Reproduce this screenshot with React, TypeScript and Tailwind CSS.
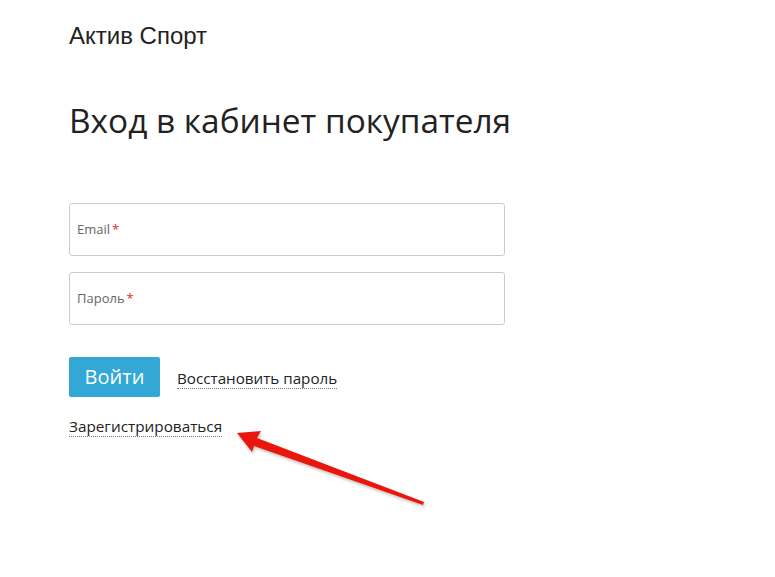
import React from 'react';

const font = { fontFamily: '"Open Sans", "Noto Sans", sans-serif' };

function Field({ label }: { label: string }) {
  return (
    <div className="h-[53px] w-[436px] rounded-[3px] border border-[#cccccc] bg-white flex items-center px-[7px]">
      <span className="text-[13px] text-[#666666]">{label}</span>
      <span className="text-[13px] text-[#e3262b] ml-[2px]">*</span>
    </div>
  );
}

export default function App() {
  return (
    <div className="relative min-h-[577px] w-[775px] bg-white text-[#222222]" style={font}>
      <div className="pl-[69px] pt-[22px]">
        <div className="font-['Liberation_Sans',Arial,sans-serif] text-[24px] leading-[28px] text-[#222222]">Актив Спорт</div>

        <h1 className="mt-[48px] text-[33.4px] leading-[44px] font-normal text-[#222222]">Вход в кабинет покупателя</h1>

        <form className="mt-[61px] flex flex-col gap-[16px]">
          <Field label="Email" />
          <Field label="Пароль" />
        </form>

        <div className="mt-[32px] flex items-center gap-[17px]">
          <button className="h-[40px] w-[91px] rounded-[2px] bg-[#33a7d5] text-white text-[20px]">Войти</button>
          <a className="text-[15.2px] leading-[20px] text-[#222222] border-b border-dotted border-[#777777] mt-[2px]">Восстановить пароль</a>
        </div>

        <div className="mt-[17px]">
          <a className="text-[15.3px] leading-[20px] text-[#222222] border-b border-dotted border-[#777777]">Зарегистрироваться</a>
        </div>
      </div>

      <svg className="absolute left-0 top-0 pointer-events-none" width="775" height="577">
        <defs>
          <filter id="sh" x="-20%" y="-20%" width="140%" height="140%">
            <feDropShadow dx="1" dy="2" stdDeviation="1.5" floodColor="#000" floodOpacity="0.25" />
          </filter>
        </defs>
        <path
          d="M237 433 L261 431 L257 438 L424 502 L423 505 L254 446 L252 452 Z"
          fill="#e8160f"
          filter="url(#sh)"
        />
      </svg>
    </div>
  );
}
